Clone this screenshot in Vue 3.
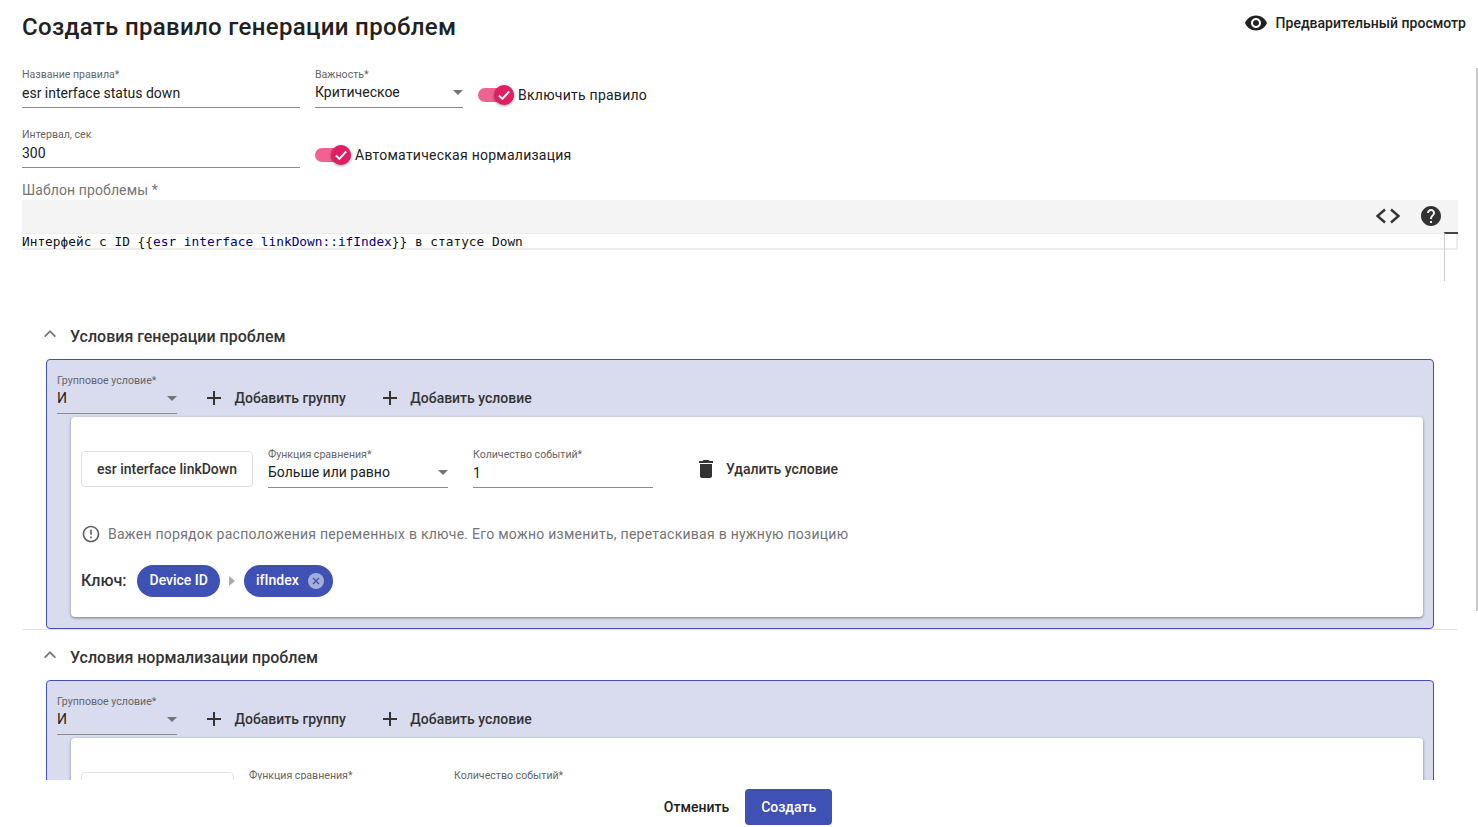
<script setup>
const groups = [
  { id: 'gen', title: 'Условия генерации проблем', narrow: false },
  { id: 'norm', title: 'Условия нормализации проблем', narrow: true }
]
const open = '{' + '{'
const close = '}' + '}'
</script>

<template>
  <div class="page">
    <main class="scroll">
      <header class="head">
        <h1>Создать правило генерации проблем</h1>
        <button class="preview">
          <svg width="24" height="24" viewBox="0 0 24 24"><path fill="#212121" d="M12 4.5C7 4.5 2.73 7.61 1 12c1.73 4.39 6 7.5 11 7.5s9.27-3.11 11-7.5c-1.73-4.39-6-7.5-11-7.5zM12 17c-2.76 0-5-2.24-5-5s2.24-5 5-5 5 2.24 5 5-2.24 5-5 5zm0-8c-1.66 0-3 1.34-3 3s1.34 3 3 3 3-1.34 3-3-1.34-3-3-3z"/></svg>
          <span>Предварительный просмотр</span>
        </button>
      </header>

      <div class="row row-one">
        <div class="field f-name"><label>Название правила*</label><div class="val">esr interface status down</div></div>
        <div class="field f-sev"><label>Важность*</label><div class="val sel">Критическое<i class="caret"></i></div></div>
        <div class="switch">
          <span class="track"><span class="thumb"><svg width="16" height="16" viewBox="0 0 16 16"><path d="M3 8.500l3.400 3.400 6.800-7.600" fill="none" stroke="#fff" stroke-width="2"/></svg></span></span>
          <span>Включить правило</span>
        </div>
      </div>

      <div class="row row-two">
        <div class="field f-name"><label>Интервал, сек</label><div class="val">300</div></div>
        <div class="switch">
          <span class="track"><span class="thumb"><svg width="16" height="16" viewBox="0 0 16 16"><path d="M3 8.500l3.400 3.400 6.800-7.600" fill="none" stroke="#fff" stroke-width="2"/></svg></span></span>
          <span>Автоматическая нормализация</span>
        </div>
      </div>

      <div class="tpl-label">Шаблон проблемы *</div>
      <div class="editor">
        <div class="toolbar">
          <svg width="26" height="24" viewBox="0 0 26 24"><path d="M10 5.500L2.500 12l7.500 6.500M16 5.500L23.500 12 16 18.500" fill="none" stroke="#333" stroke-width="2.400"/></svg>
          <svg width="24" height="24" viewBox="0 0 24 24"><path fill="#333" d="M12 2C6.480 2 2 6.480 2 12s4.480 10 10 10 10-4.480 10-10S17.520 2 12 2zm1 17h-2v-2h2v2zm2.070-7.750l-.9.920C13.450 12.900 13 13.500 13 15h-2v-.5c0-1.100.450-2.100 1.170-2.830l1.240-1.260c.370-.360.590-.860.590-1.410 0-1.100-.9-2-2-2s-2 .9-2 2H8c0-2.210 1.790-4 4-4s4 1.790 4 4c0 .880-.360 1.680-.930 2.250z"/></svg>
        </div>
        <div class="code">Интерфейс с ID {{ open }}<span class="v">esr interface linkDown::ifIndex</span>{{ close }} в статусе Down</div>
        <div class="gutter"></div>
      </div>

      <section v-for="g in groups" :key="g.id" class="section" :class="{ second: g.narrow }">
        <div class="sec-head">
          <svg width="24" height="24" viewBox="0 0 24 24"><path fill="#757575" d="M12 8.500l-6 6 1.300 1.300 4.700-4.700 4.700 4.700 1.300-1.300z" transform="translate(0 -3.500)"/></svg>
          <h2>{{ g.title }}</h2>
        </div>
        <div class="group">
          <div class="group-bar">
            <div class="field f-group"><label>Групповое условие*</label><div class="val sel">И<i class="caret"></i></div></div>
            <button class="act"><svg width="24" height="24" viewBox="0 0 24 24"><path fill="#333" d="M19 13h-6v6h-2v-6H5v-2h6V5h2v6h6z"/></svg>Добавить группу</button>
            <button class="act"><svg width="24" height="24" viewBox="0 0 24 24"><path fill="#333" d="M19 13h-6v6h-2v-6H5v-2h6V5h2v6h6z"/></svg>Добавить условие</button>
          </div>
          <div class="card">
            <div class="cond">
              <div class="ev-btn"><span v-if="!g.narrow">esr interface linkDown</span></div>
              <div class="field f-cmp"><label>Функция сравнения*</label><div class="val sel">Больше или равно<i class="caret"></i></div></div>
              <div class="field f-cnt"><label>Количество событий*</label><div class="val">1</div></div>
              <button class="act del"><svg width="24" height="24" viewBox="0 0 24 24"><path fill="#333" d="M6 19c0 1.100.9 2 2 2h8c1.100 0 2-.9 2-2V7H6v12zM19 4h-3.500l-1-1h-5l-1 1H5v2h14V4z"/></svg>Удалить условие</button>
            </div>
            <div class="hint">
              <svg width="20" height="20" viewBox="0 0 24 24"><path fill="#616161" d="M11 15h2v2h-2zm0-8h2v6h-2zm1-5C6.470 2 2 6.480 2 12s4.470 10 10 10c5.520 0 10-4.480 10-10S17.520 2 12 2zm0 18c-4.420 0-8-3.580-8-8s3.580-8 8-8 8 3.580 8 8-3.580 8-8 8z"/></svg>
              <span>Важен порядок расположения переменных в ключе. Его можно изменить, перетаскивая в нужную позицию</span>
            </div>
            <div class="key">
              <b>Ключ:</b>
              <span class="chip">Device ID</span>
              <i class="tri"></i>
              <span class="chip">ifIndex
                <svg width="16" height="16" viewBox="0 0 16 16"><circle cx="8" cy="8" r="8" fill="#a5add9"/><path d="M5 5l6 6M11 5l-6 6" stroke="#3f51b5" stroke-width="1.400"/></svg>
              </span>
            </div>
          </div>
        </div>
      </section>
      <div class="scrollbar"></div>
    </main>
    <footer class="foot">
      <button class="cancel">Отменить</button>
      <button class="create">Создать</button>
    </footer>
  </div>
</template>

<style>
html, body { margin: 0; overflow: hidden; background: #fff; }
</style>

<style scoped>
.page { width: 1478px; height: 827px; display: flex; flex-direction: column; overflow: hidden; font-family: Roboto, "Liberation Sans", sans-serif; color: #212121; background: #fff; }
.scroll { position: relative; height: 780px; overflow: hidden; box-sizing: border-box; padding: 0 20px 0 22px; flex: none; }
button { font: inherit; border: 0; background: none; padding: 0; color: inherit; }
.head { display: flex; justify-content: space-between; align-items: flex-start; height: 68px; margin-right: -8px; }
h1 { margin: 11px 0 0; font-size: 24px; line-height: 32px; font-weight: 500; letter-spacing: 0.33px; }
.preview { display: flex; align-items: center; gap: 8px; height: 24px; margin-top: 11px; font-size: 14px; font-weight: 500; letter-spacing: 0.02px; }
.row { display: flex; align-items: flex-start; gap: 15px; height: 60px; }
.field label { display: block; font-size: 10.600px; line-height: 13px; color: #666; }
.field .val { position: relative; box-sizing: border-box; font-size: 14px; line-height: 20px; color: #212121; border-bottom: 1px solid #8c8c8c; }
.row .val { height: 27px; padding-top: 2px; }
.f-name { width: 278px; }
.f-sev { width: 148px; }
.row .f-sev .val { padding-top: 1px; }
.caret { position: absolute; right: 0; top: 8px; width: 0; height: 0; border-left: 5px solid transparent; border-right: 5px solid transparent; border-top: 5px solid #757575; }
.row .caret { top: 9px; }
.switch { display: flex; align-items: center; gap: 4px; font-size: 14px; letter-spacing: 0.25px; color: #212121; height: 24px; margin-top: 15px; }
.track { position: relative; display: block; width: 36px; height: 14px; border-radius: 7px; background: #f06292; }
.thumb { position: absolute; left: 16px; top: -3px; width: 20px; height: 20px; border-radius: 50%; background: #e01f63; display: flex; align-items: center; justify-content: center; box-shadow: 0 1px 3px rgba(0,0,0,.4); }
.tpl-label { font-size: 14px; line-height: 16px; color: #757575; margin-top: -6px; height: 18px; letter-spacing: 0.1px; }
.editor { position: relative; height: 81px; }
.toolbar { box-sizing: border-box; height: 33px; background: #f4f4f4; display: flex; justify-content: flex-end; align-items: center; gap: 18px; padding: 0 15px 2px 0; }
.code { box-sizing: border-box; height: 17px; border-top: 1px solid #ececec; border-bottom: 2px solid #ececec; border-right: 2px solid #ececec; font-family: "DejaVu Sans Mono", monospace; font-size: 12.800px; line-height: 15px; white-space: pre; color: #111; }
.code .v { color: #000080; }
.gutter { position: absolute; right: 0; top: 32px; width: 14px; height: 49px; border-left: 1px solid #ccc; border-top: 2px solid #444; box-sizing: border-box; }
.section { margin: 0 0 0 24px; width: 1388px; padding-top: 44px; }
.section.second { padding-top: 17px; position: relative; }
.section.second::before { content: ""; position: absolute; left: -23px; top: 0; width: 1434px; height: 1px; background: #e0e0e0; }
.section.second .group { height: 200px; }
.sec-head { display: flex; align-items: center; gap: 8px; height: 24px; margin-left: -8px; margin-bottom: 10px; }
h2 { margin: 0; font-size: 16px; font-weight: 500; line-height: 24px; color: #333; }
.group { box-sizing: border-box; width: 1388px; border: 1px solid #3f51b5; border-radius: 4px; background: #d9dbef; padding: 11px 10px 11px 24px; height: 270px; }
.group-bar { display: flex; align-items: flex-end; height: 43px; margin-left: -14px; }
.f-group { width: 120px; }
.f-group .val { height: 27px; padding-top: 1px; }
.f-group .caret { top: 9px; }
.act { display: flex; align-items: center; gap: 8.500px; font-size: 14px; font-weight: 500; color: #333; height: 24px; margin-bottom: 4px; }
.act + .act { margin-left: 32px; }
.group-bar > .field + .act { margin-left: 25px; }
.card { margin-top: 3px; background: #fff; border-radius: 4px; height: 200px; width: 1352px; box-sizing: border-box; padding: 34px 10px 0 10px; box-shadow: 0 1px 3px rgba(0,0,0,.45); }
.cond { display: flex; align-items: flex-start; height: 36px; }
.ev-btn { box-sizing: border-box; width: 172px; height: 36px; border: 1px solid #e0e0e0; border-radius: 4px; font-size: 14px; font-weight: 500; color: #333; text-align: center; line-height: 34px; margin-right: 15px; }
.second .ev-btn { width: 153px; }
.cond .field label { margin-top: -3px; }
.cond .val { height: 26px; padding-top: 1px; margin-top: 1px; }
.cond .f-cmp .val { padding-top: 0; }
.f-cmp { width: 180px; margin-right: 25px; }
.f-cnt { width: 180px; }
.act.del { margin: 6px 0 0 41px; gap: 8px; }
.hint { display: flex; align-items: center; gap: 7px; margin-top: 37px; height: 20px; font-size: 14px; letter-spacing: 0.26px; color: #757575; }
.key { display: flex; align-items: center; margin-top: 21px; height: 32px; }
.key b { font-size: 16px; font-weight: 500; color: #333; margin: 0 10px 2px 0; }
.chip { display: flex; align-items: center; gap: 9px; box-sizing: border-box; height: 32px; padding: 0 12px 2px; border-radius: 16px; background: #3f51b5; color: #fff; font-size: 14px; font-weight: 500; }
.chip:first-of-type { padding-left: 13px; }
.chip svg { margin: 2px -3px 0 0; }
.tri { width: 0; height: 0; margin: 0 9px; border-top: 5px solid transparent; border-bottom: 5px solid transparent; border-left: 6px solid #aaa; }
.scrollbar { position: absolute; right: 0; top: 68px; width: 2px; height: 543px; background: #c8c8c8; }
.foot { height: 47px; flex: none; display: flex; justify-content: center; align-items: flex-start; padding-top: 9px; box-sizing: border-box; gap: 16px; padding-left: 18px; }
.cancel { height: 36px; font-size: 14px; font-weight: 500; color: #212121; }
.create { width: 87px; height: 36px; border-radius: 4px; background: #3f51b5; color: #fff; font-size: 14px; font-weight: 500; }
</style>
